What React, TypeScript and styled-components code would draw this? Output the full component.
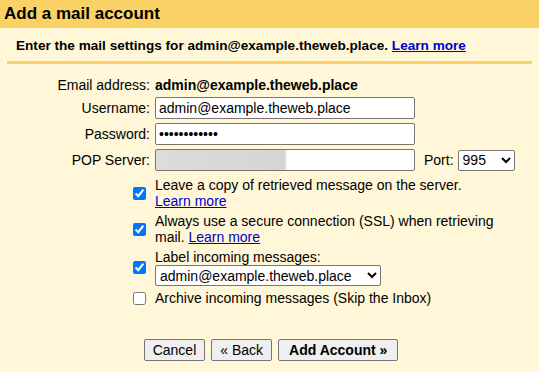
import styled, { createGlobalStyle } from 'styled-components';

const GlobalStyle = createGlobalStyle`
    html, body {
        margin: 0;
        padding: 0;
        background: #fff7d8;
    }
    body {
        font-family: "Liberation Sans", Arial, sans-serif;
        font-size: 14px;
        color: #000;
    }
`;

type CheckProps = {
    checked: boolean
    children: React.ReactNode
}

const CheckRow = ({ checked, children }: CheckProps) => (
    <CheckLine>
        <CheckCell>
            <Check type='checkbox' defaultChecked={checked} />
        </CheckCell>
        <CheckText>{children}</CheckText>
    </CheckLine>
)

const App = () => {
    return (
        <Page>
            <GlobalStyle />
            <Header>Add a mail account</Header>
            <Intro>
                Enter the mail settings for admin@example.theweb.place. <Link href='#'>Learn more</Link>
            </Intro>
            <Divider />

            <Form>
                <Label>Email address:</Label>
                <Email>admin@example.theweb.place</Email>

                <Label>Username:</Label>
                <Field><Input defaultValue='admin@example.theweb.place' /></Field>

                <Label>Password:</Label>
                <Field><Input type='password' defaultValue='............' /></Field>

                <Label>POP Server:</Label>
                <Field>
                    <Input blurred defaultValue='' />
                    <PortLabel>Port:</PortLabel>
                    <Select width={57} defaultValue='995'>
                        <option>995</option>
                        <option>110</option>
                    </Select>
                </Field>
            </Form>

            <Checks>
                <CheckRow checked>
                    Leave a copy of retrieved message on the server. <Link href='#'>Learn more</Link>
                </CheckRow>
                <CheckRow checked>
                    Always use a secure connection (SSL) when retrieving mail. <Link href='#'>Learn more</Link>
                </CheckRow>
                <CheckRow checked>
                    Label incoming messages:
                    <div>
                        <Select width={226} defaultValue='admin@example.theweb.place'>
                            <option>admin@example.theweb.place</option>
                        </Select>
                    </div>
                </CheckRow>
                <CheckRow checked={false}>
                    Archive incoming messages (Skip the Inbox)
                </CheckRow>
            </Checks>

            <Buttons>
                <Button>Cancel</Button>
                <Button>« Back</Button>
                <Button primary>Add Account »</Button>
            </Buttons>
        </Page>
    )
}

const Page = styled.div`
    width: 539px;
    height: 372px;
    overflow: hidden;
`;

const Header = styled.div`
    background: #fad165;
    height: 28px;
    line-height: 28px;
    padding-left: 4px;
    font-size: 17px;
    font-weight: bold;
`;

const Intro = styled.div`
    padding: 10px 16px 0;
    font-size: 13.6px;
    font-weight: bold;
    line-height: 16px;
`;

const Link = styled.a`
    color: #0000cc;
    text-decoration: underline;
    white-space: nowrap;
`;

const Divider = styled.div`
    margin: 7px 7px 0;
    height: 3px;
    background: #fad165;
`;

const Form = styled.div`
    display: grid;
    grid-template-columns: 150px 1fr;
    column-gap: 5px;
    row-gap: 4px;
    align-items: center;
    margin-top: 13px;
`;

const Label = styled.div`
    text-align: right;
`;

const Email = styled.div`
    font-weight: bold;
    line-height: 16px;
`;

const Field = styled.div`
    display: flex;
    align-items: center;
`;

const Input = styled.input<{ blurred?: boolean }>`
    box-sizing: border-box;
    width: 260px;
    height: 22px;
    padding: 1px 3px;
    border: 1px solid #767676;
    border-radius: 2px;
    font-family: "Liberation Sans", Arial, sans-serif;
    font-size: 14px;
    color: #000;
    background: ${p => p.blurred
        ? 'linear-gradient(90deg, #dcdcdc 0, #d4d4d4 50%, #e2e2e2 128px, #fff 132px)'
        : '#fff'};
    outline: none;
`;

const PortLabel = styled.span`
    margin: 0 4px 0 9px;
`;

const Select = styled.select<{ width: number }>`
    box-sizing: border-box;
    width: ${p => p.width}px;
    height: 21px;
    border: 1px solid #767676;
    border-radius: 2px;
    background: #fff;
    font-family: "Liberation Sans", Arial, sans-serif;
    font-size: 14px;
    color: #000;
`;

const Checks = styled.div`
    display: flex;
    flex-direction: column;
    gap: 4px;
    margin-top: 6px;
`;

const CheckLine = styled.div`
    display: flex;
    align-items: center;
`;

const CheckCell = styled.div`
    width: 150px;
    display: flex;
    justify-content: flex-end;
    flex-shrink: 0;
`;

const Check = styled.input`
    width: 13px;
    height: 13px;
    margin: 0 4px 0 0;
    accent-color: #0075ff;
`;

const CheckText = styled.div`
    margin-left: 5px;
    width: 355px;
    line-height: 16px;
`;

const Buttons = styled.div`
    display: flex;
    justify-content: center;
    gap: 6px;
    margin-top: 33px;
    padding-left: 3px;
`;

const Button = styled.button<{ primary?: boolean }>`
    height: 22px;
    padding: 1px ${p => p.primary ? 10 : 8}px;
    border: 1px solid #767676;
    border-radius: 2px;
    background: #efefef;
    font-family: "Liberation Sans", Arial, sans-serif;
    font-size: 14px;
    font-weight: ${p => p.primary ? 'bold' : 'normal'};
    color: #000;
`;

export default App
